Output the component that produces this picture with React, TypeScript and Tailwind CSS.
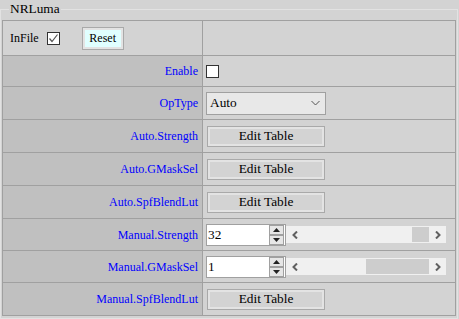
import React from "react";

function Label({ children }: { children: React.ReactNode }) {
  return (
    <div className="w-[200px] border-r border-[#a0a0a0] bg-[#c0c0c0] flex items-center justify-end pr-[4px] text-[12px] text-[#0000ff]">
      {children}
    </div>
  );
}

function EditBtn() {
  return (
    <div className="w-[118px] h-[21px] border border-[#a9a9a9] bg-[#d3d3d3] shadow-[inset_0_0_0_2px_#e3e3e3] flex items-center justify-center text-[13.33px] text-black leading-none">
      Edit Table
    </div>
  );
}

function Spin() {
  return (
    <div className="ml-auto mr-[1px] flex flex-col w-[15px] h-[20px]">
      <div className="h-[10px] border border-[#a0a0a0] bg-[#e6e6e6] flex items-center justify-center">
        <svg width="7" height="4" viewBox="0 0 7 4">
          <path d="M3.5 0 L7 4 L0 4Z" fill="#222" />
        </svg>
      </div>
      <div className="h-[10px] border border-[#a0a0a0] bg-[#e6e6e6] flex items-center justify-center">
        <svg width="7" height="4" viewBox="0 0 7 4">
          <path d="M0 0 L7 0 L3.5 4Z" fill="#222" />
        </svg>
      </div>
    </div>
  );
}

function NumScroll({ value, thumb }: { value: string; thumb: number }) {
  return (
    <div className="flex items-center pl-[3px]">
      <div className="w-[80px] h-[22px] border border-[#a0a0a0] bg-white flex items-center pl-[1px] text-[13.33px] text-black">
        <span>{value}</span>
        <Spin />
      </div>
      <div className="w-[160px] h-[17px] bg-[#f0f0f0] flex items-stretch">
        <div className="w-[17px] flex items-center justify-center">
          <svg width="6" height="8" viewBox="0 0 6 8">
            <path d="M5 0.5 L1.5 4 L5 7.5" stroke="#606060" strokeWidth="2" fill="none" />
          </svg>
        </div>
        <div className="flex-1 flex justify-end py-[1px]">
          <div className="h-full bg-[#cdcdcd]" style={{ width: thumb }} />
        </div>
        <div className="w-[17px] flex items-center justify-center">
          <svg width="6" height="8" viewBox="0 0 6 8">
            <path d="M1 0.5 L4.5 4 L1 7.5" stroke="#606060" strokeWidth="2" fill="none" />
          </svg>
        </div>
      </div>
    </div>
  );
}

export default function App() {
  return (
    <div className="[font-family:'Liberation_Serif','Times_New_Roman',serif] bg-[#d3d3d3] w-[459px] h-[319px] overflow-hidden">
      <fieldset className="w-[458px] h-[319px] border border-[#e2e2e2] pl-[1px] pb-[2px]">
        <legend className="ml-[7px] px-[1px] text-[13.33px] leading-[18px] text-black">NRLuma</legend>
        <div className="mt-[2px] w-[454px] border border-[#a0a0a0] flex flex-col">
          <div className="h-[35px] flex border-b border-[#a0a0a0]">
            <div className="w-[200px] border-r border-[#a0a0a0] flex items-center pl-[7px] text-[12px] text-black">
              <span>InFile</span>
              <div className="ml-[8px] w-[13px] h-[13px] border border-[#333] bg-white flex items-center justify-center">
                <svg width="11" height="11" viewBox="0 0 11 11">
                  <path d="M1.5 5.5 L4 8.5 L9.5 1.5" stroke="#555" strokeWidth="1.2" fill="none" />
                </svg>
              </div>
              <div className="ml-[22px] w-[42px] h-[23px] border border-[#a9a9a9] bg-[#e0ffff] shadow-[inset_0_0_0_2px_#e3e3e3] flex items-center justify-center text-[12px]">
                Reset
              </div>
            </div>
            <div className="flex-1" />
          </div>
          <div className="h-[31px] flex border-b border-[#a0a0a0]">
            <Label>Enable</Label>
            <div className="flex-1 flex items-center pl-[3px]">
              <div className="w-[13px] h-[13px] border border-[#333] bg-white" />
            </div>
          </div>
          <div className="h-[33px] flex border-b border-[#a0a0a0]">
            <Label>OpType</Label>
            <div className="flex-1 flex items-center pl-[3px]">
              <div className="w-[120px] h-[23px] border border-[#a0a0a0] bg-[#e8e8e8] flex items-center pl-[3px] pr-[5px] text-[13.33px] text-black">
                <span>Auto</span>
                <svg className="ml-auto" width="9" height="6" viewBox="0 0 9 6">
                  <path d="M0.5 1 L4.5 5 L8.5 1" stroke="#555" strokeWidth="1" fill="none" />
                </svg>
              </div>
            </div>
          </div>
          <div className="h-[33px] flex border-b border-[#a0a0a0]">
            <Label>Auto.Strength</Label>
            <div className="flex-1 flex items-center pl-[4px]">
              <EditBtn />
            </div>
          </div>
          <div className="h-[33px] flex border-b border-[#a0a0a0]">
            <Label>Auto.GMaskSel</Label>
            <div className="flex-1 flex items-center pl-[4px]">
              <EditBtn />
            </div>
          </div>
          <div className="h-[33px] flex border-b border-[#a0a0a0]">
            <Label>Auto.SpfBlendLut</Label>
            <div className="flex-1 flex items-center pl-[4px]">
              <EditBtn />
            </div>
          </div>
          <div className="h-[32px] flex border-b border-[#a0a0a0]">
            <Label>Manual.Strength</Label>
            <div className="flex-1 flex items-center">
              <NumScroll value="32" thumb={17} />
            </div>
          </div>
          <div className="h-[32px] flex border-b border-[#a0a0a0]">
            <Label>Manual.GMaskSel</Label>
            <div className="flex-1 flex items-center">
              <NumScroll value="1" thumb={63} />
            </div>
          </div>
          <div className="h-[32px] flex">
            <Label>Manual.SpfBlendLut</Label>
            <div className="flex-1 flex items-center pl-[4px]">
              <EditBtn />
            </div>
          </div>
        </div>
      </fieldset>
    </div>
  );
}
